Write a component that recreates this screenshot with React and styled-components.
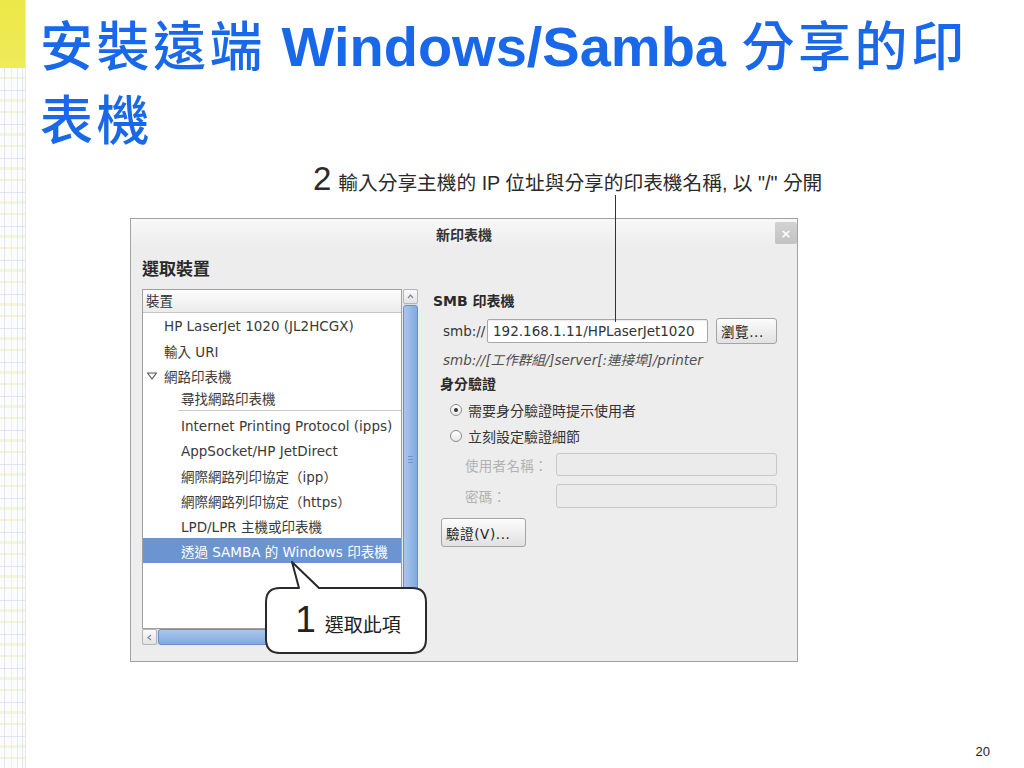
import React from "react";
import styled, { createGlobalStyle } from "styled-components";

const GlobalStyle = createGlobalStyle`
  html, body { margin: 0; padding: 0; background: #ffffff; }
  body { font-family: "Liberation Sans", "Noto Sans CJK TC", sans-serif; }
  * { box-sizing: border-box; }
`;

const Slide = styled.div`
  width: 1024px;
  height: 768px;
  display: flex;
  position: relative;
  overflow: hidden;
  background: #ffffff;
`;

const Strip = styled.div`
  flex: 0 0 26px;
  height: 100%;
  border-right: 1px solid #e6e8ea;
  background-color: #fbfcfd;
  background-image:
    linear-gradient(to bottom, #ece848 0, #efeb5a 68px, transparent 68px),
    repeating-linear-gradient(to right, transparent 0 4px, rgba(205, 215, 230, 0.55) 4px 5px, transparent 5px 11px, rgba(235, 235, 190, 0.6) 11px 12px, transparent 12px 17px, rgba(205, 215, 230, 0.5) 17px 18px),
    repeating-linear-gradient(to bottom, transparent 0 9px, rgba(236, 238, 180, 0.55) 9px 11px, transparent 11px 22px, rgba(200, 212, 232, 0.55) 22px 23px, transparent 23px 31px, rgba(240, 240, 200, 0.6) 31px 34px);
`;

const Main = styled.div`
  flex: 1;
  display: flex;
  flex-direction: column;
  padding: 0 34px 0 14px;
`;

const Title = styled.h1`
  margin: 8px 0 0;
  font-family: "Noto Sans CJK TC", "Liberation Sans", sans-serif;
  font-weight: 500;
  font-size: 53px;
  line-height: 70px;
  letter-spacing: 3.5px;
  color: #1a68ea;
`;

const TitleLatin = styled.span`
  font-family: "Liberation Sans", Arial, sans-serif;
  font-weight: 700;
  font-size: 56px;
  letter-spacing: 0;
`;

const Annotation = styled.div`
  position: relative;
  z-index: 2;
  align-self: flex-start;
  display: flex;
  align-items: baseline;
  margin: 12px 0 0 273px;
  height: 30px;
  line-height: 30px;
  color: #2a2a2a;
`;

const AnnNum = styled.span`
  font-family: "Liberation Sans", Arial, sans-serif;
  font-size: 33px;
`;

const AnnText = styled.span`
  margin-left: 7px;
  font-family: "Liberation Sans", "Noto Sans CJK TC", sans-serif;
  font-size: 19.7px;
`;

const Leader = styled.div`
  position: absolute;
  left: 302px;
  top: 31px;
  width: 1px;
  height: 127px;
  background: #333333;
`;

const Dialog = styled.div`
  position: relative;
  margin: 24px 0 0 90px;
  width: 668px;
  height: 444px;
  border: 1px solid #a2a2a2;
  background: #ededed;
  display: flex;
  flex-direction: column;
  font-family: "DejaVu Sans", "Noto Sans CJK TC", sans-serif;
  font-size: 13.5px;
  color: #363636;
`;

const TitleBar = styled.div`
  flex: none;
  height: 30px;
  display: grid;
  grid-template-columns: 1fr auto 1fr;
  align-items: center;
  background: linear-gradient(#f8f8f8, #ececec);
`;

const DialogTitle = styled.div`
  grid-column: 2;
  font-weight: bold;
  font-size: 14px;
  color: #333;
`;

const CloseButton = styled.div`
  grid-column: 3;
  justify-self: end;
  align-self: start;
  margin-top: 3px;
  width: 22px;
  height: 22px;
  border-radius: 2px;
  background: linear-gradient(#d2d2d2, #c2c2c2);
  color: #ffffff;
  font-family: "DejaVu Sans", sans-serif;
  font-size: 13px;
  font-weight: bold;
  display: flex;
  align-items: center;
  justify-content: center;
`;

const Body = styled.div`
  flex: 1;
  display: grid;
  grid-template-columns: 276px 1fr;
  column-gap: 15px;
  padding: 0 12px 0 11px;
`;

const LeftCol = styled.div`
  display: flex;
  flex-direction: column;
`;

const SectionHeading = styled.div`
  margin: 10px 0 10px;
  font-size: 17px;
  line-height: 20px;
  font-weight: bold;
  color: #2a2a2a;
`;

const Scrolled = styled.div`
  display: grid;
  grid-template-columns: 260px 15px;
  grid-template-rows: 340px 16px;
  column-gap: 1px;
`;

const ListBox = styled.div`
  border: 1px solid #a0a0a0;
  background: #ffffff;
  overflow: hidden;
  display: flex;
  flex-direction: column;
`;

const ListHeader = styled.div`
  height: 23px;
  flex: none;
  border-bottom: 1px solid #c6c6c6;
  background: linear-gradient(#fdfdfd, #ebebeb);
  padding-left: 3px;
  line-height: 22px;
  color: #333;
`;

const Row = styled.div`
  flex: none;
  height: ${(p) => p.$h || 25}px;
  display: flex;
  align-items: center;
  gap: 6px;
  padding-left: ${(p) => p.$indent}px;
  white-space: nowrap;
  background: ${(p) => (p.$selected ? "#6a95d0" : "transparent")};
  color: ${(p) => (p.$selected ? "#ffffff" : "#3a3a3a")};
`;

const Separator = styled.div`
  flex: none;
  height: 5px;
  margin-left: 35px;
  display: flex;
  align-items: center;
  &::after {
    content: "";
    flex: 1;
    height: 1px;
    background: #c9c9c9;
  }
`;

const VScroll = styled.div`
  display: flex;
  flex-direction: column;
  gap: 1px;
  background: #dedede;
`;

const HScroll = styled.div`
  display: flex;
  gap: 1px;
  background: #dedede;
`;

const ArrowBtn = styled.div`
  flex: none;
  width: 15px;
  height: ${(p) => (p.$h ? "16px" : "15px")};
  border: 1px solid #b4b4b4;
  border-radius: 2px;
  background: linear-gradient(#fafafa, #e3e3e3);
  display: flex;
  align-items: center;
  justify-content: center;
`;

const Thumb = styled.div`
  flex: 1;
  border: 1px solid #6590c9;
  border-radius: 3px;
  background: linear-gradient(${(p) => (p.$h ? "180deg" : "90deg")}, #a9c7ec, #80aadf);
  display: flex;
  align-items: center;
  justify-content: center;
`;

const Grip = styled.div`
  width: 5px;
  height: 7px;
  background: repeating-linear-gradient(to bottom, #6e97cf 0 1px, transparent 1px 3px);
`;

const RightCol = styled.div`
  display: flex;
  flex-direction: column;
  align-items: flex-start;
`;

const RightHeading = styled.div`
  margin-top: ${(p) => p.$mt}px;
  padding-left: ${(p) => p.$pl || 0}px;
  font-size: 14px;
  font-weight: bold;
  line-height: 20px;
  color: #2a2a2a;
`;

const UriRow = styled.div`
  margin-top: 7px;
  padding-left: 10px;
  height: 26px;
  display: grid;
  grid-template-columns: 36px 221px 61px;
  column-gap: 8px;
  align-items: center;
`;

const TextField = styled.div`
  height: ${(p) => p.$h || 24}px;
  border: 1px solid ${(p) => (p.$disabled ? "#c8c8c8" : "#a6a6a6")};
  border-radius: ${(p) => (p.$disabled ? 3 : 2)}px;
  background: ${(p) => (p.$disabled ? "#ebebeb" : "#ffffff")};
  box-shadow: ${(p) => (p.$disabled ? "none" : "inset 0 1px 1px rgba(0,0,0,0.08)")};
  padding-left: 5px;
  display: flex;
  align-items: center;
  color: #333;
  white-space: nowrap;
  overflow: hidden;
`;

const Button = styled.div`
  width: ${(p) => p.$w}px;
  height: ${(p) => p.$h}px;
  margin-left: ${(p) => p.$ml || 0}px;
  margin-top: ${(p) => p.$mt || 0}px;
  border: 1px solid #a4a4a4;
  border-radius: 3px;
  background: linear-gradient(#fcfcfc, #e1e1e1);
  box-shadow: inset 0 1px #ffffff;
  display: flex;
  align-items: center;
  padding-left: 4px;
  color: #222;
  white-space: nowrap;
  letter-spacing: 0.6px;
`;

const Hint = styled.div`
  margin-top: 7px;
  padding-left: 10px;
  line-height: 18px;
  font-style: italic;
  color: #505050;
`;

const RadioRow = styled.div`
  margin-top: ${(p) => p.$mt}px;
  padding-left: 17px;
  height: 22px;
  display: flex;
  align-items: center;
  gap: 6px;
  font-size: 14px;
  color: #333;
`;

const Radio = styled.span`
  width: 12px;
  height: 12px;
  border-radius: 50%;
  border: 1px solid #8a8a8a;
  background: linear-gradient(#ffffff, #e8e8e8);
  display: flex;
  align-items: center;
  justify-content: center;
  &::after {
    content: "";
    width: 4px;
    height: 4px;
    border-radius: 50%;
    background: ${(p) => (p.$checked ? "#333" : "transparent")};
  }
`;

const CredGrid = styled.div`
  margin-top: 6px;
  padding-left: 32px;
  display: grid;
  grid-template-columns: 86px 221px;
  grid-template-rows: 23px 24px;
  column-gap: 5px;
  row-gap: 8px;
  align-items: center;
`;

const DisabledLabel = styled.span`
  color: #b2b2b2;
  font-size: 13.5px;
  white-space: nowrap;
  letter-spacing: 0.3px;
`;

const Callout = styled.div`
  position: absolute;
  left: 134px;
  top: 342px;
  width: 162px;
  height: 93px;
  padding-top: 27px;
`;

const CalloutShape = styled.svg`
  position: absolute;
  inset: 0;
`;

const CalloutContent = styled.div`
  position: relative;
  height: 65px;
  display: flex;
  align-items: baseline;
  justify-content: center;
  gap: 9px;
  padding-top: 14px;
  padding-left: 4px;
  line-height: 36px;
  color: #222;
`;

const CalloutNum = styled.span`
  font-family: "Liberation Sans", Arial, sans-serif;
  font-size: 37px;
`;

const CalloutText = styled.span`
  font-family: "Noto Sans CJK TC", sans-serif;
  font-size: 19px;
`;

const Footer = styled.div`
  margin-top: auto;
  margin-bottom: 8px;
  align-self: flex-end;
  font-family: "Liberation Sans", Arial, sans-serif;
  font-size: 13px;
  line-height: 16px;
  color: #222;
`;

const Expander = () => (
  <svg width="12" height="10" viewBox="0 0 12 10">
    <polygon points="1.5,2 10.5,2 6,8" fill="none" stroke="#555" strokeWidth="1.2" strokeLinejoin="round" />
  </svg>
);

const Chevron = ({ dir }) => {
  const pts = {
    up: "2,6 4.5,3 7,6",
    down: "2,3 4.5,6 7,3",
    left: "6,2 3,4.5 6,7",
    right: "3,2 6,4.5 3,7",
  }[dir];
  return (
    <svg width="9" height="9" viewBox="0 0 9 9">
      <polyline points={pts} fill="none" stroke="#7a8aa0" strokeWidth="1.2" />
    </svg>
  );
};

const items = [
  { label: "HP LaserJet 1020 (JL2HCGX)", indent: 21 },
  { label: "輸入 URI", indent: 21 },
  { label: "網路印表機", indent: 3, expander: true },
  { label: "尋找網路印表機", indent: 38, h: 20, sepAfter: true },
  { label: "Internet Printing Protocol (ipps)", indent: 38 },
  { label: "AppSocket/HP JetDirect", indent: 38 },
  { label: "網際網路列印協定（ipp）", indent: 38 },
  { label: "網際網路列印協定（https）", indent: 38 },
  { label: "LPD/LPR 主機或印表機", indent: 38 },
  { label: "透過 SAMBA 的 Windows 印表機", indent: 38, selected: true },
];

export default function App() {
  return (
    <>
      <GlobalStyle />
      <Slide>
        <Strip />
        <Main>
          <Title>
            安裝遠端<TitleLatin> Windows/Samba </TitleLatin>分享的印
            <br />
            表機
          </Title>

          <Annotation>
            <AnnNum>2</AnnNum>
            <AnnText>輸入分享主機的 IP 位址與分享的印表機名稱, 以 "/" 分開</AnnText>
            <Leader />
          </Annotation>

          <Dialog>
            <TitleBar>
              <DialogTitle>新印表機</DialogTitle>
              <CloseButton>×</CloseButton>
            </TitleBar>
            <Body>
              <LeftCol>
                <SectionHeading>選取裝置</SectionHeading>
                <Scrolled>
                  <ListBox>
                    <ListHeader>裝置</ListHeader>
                    {items.map((it) => (
                      <React.Fragment key={it.label}>
                        <Row $indent={it.indent} $h={it.h} $selected={it.selected}>
                          {it.expander && <Expander />}
                          {it.label}
                        </Row>
                        {it.sepAfter && <Separator />}
                      </React.Fragment>
                    ))}
                  </ListBox>
                  <VScroll>
                    <ArrowBtn>
                      <Chevron dir="up" />
                    </ArrowBtn>
                    <Thumb>
                      <Grip />
                    </Thumb>
                    <ArrowBtn>
                      <Chevron dir="down" />
                    </ArrowBtn>
                  </VScroll>
                  <HScroll>
                    <ArrowBtn $h>
                      <Chevron dir="left" />
                    </ArrowBtn>
                    <Thumb $h />
                    <ArrowBtn $h>
                      <Chevron dir="right" />
                    </ArrowBtn>
                  </HScroll>
                </Scrolled>
              </LeftCol>

              <RightCol>
                <RightHeading $mt={42}>SMB 印表機</RightHeading>
                <UriRow>
                  <span>smb://</span>
                  <TextField>192.168.1.11/HPLaserJet1020</TextField>
                  <Button $w={61} $h={26}>瀏覽...</Button>
                </UriRow>
                <Hint>smb://[工作群組/]server[:連接埠]/printer</Hint>
                <RightHeading $mt={5} $pl={7}>身分驗證</RightHeading>
                <RadioRow $mt={5}>
                  <Radio $checked />
                  需要身分驗證時提示使用者
                </RadioRow>
                <RadioRow $mt={4}>
                  <Radio />
                  立刻設定驗證細節
                </RadioRow>
                <CredGrid>
                  <DisabledLabel>使用者名稱：</DisabledLabel>
                  <TextField $disabled $h={23} />
                  <DisabledLabel>密碼：</DisabledLabel>
                  <TextField $disabled $h={24} />
                </CredGrid>
                <Button $w={85} $h={29} $ml={8} $mt={10}>驗證(V)...</Button>
              </RightCol>
            </Body>

            <Callout>
              <CalloutShape width="162" height="93" viewBox="0 0 162 93">
                <path
                  d="M 15 27 L 34 27 L 27 1 L 54 27 L 147 27 Q 161 27 161 41 L 161 78 Q 161 92 147 92 L 15 92 Q 1 92 1 78 L 1 41 Q 1 27 15 27 Z"
                  fill="#ffffff"
                  stroke="#2a2a2a"
                  strokeWidth="2"
                  strokeLinejoin="round"
                />
              </CalloutShape>
              <CalloutContent>
                <CalloutNum>1</CalloutNum>
                <CalloutText>選取此項</CalloutText>
              </CalloutContent>
            </Callout>
          </Dialog>

          <Footer>20</Footer>
        </Main>
      </Slide>
    </>
  );
}
